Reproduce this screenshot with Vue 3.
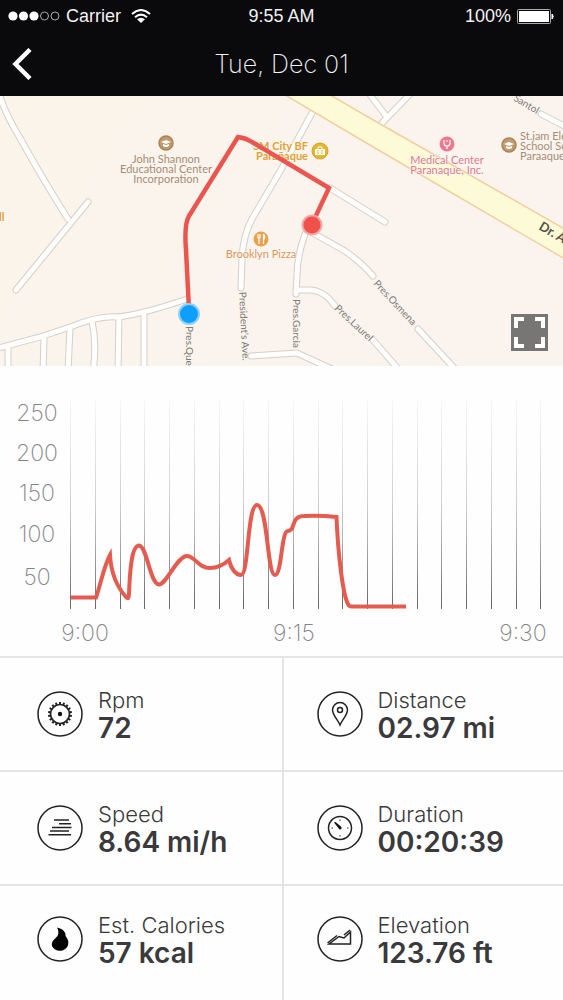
<script setup>
const roads = [
  'M-2 90 Q4 112 20 138 Q42 178 68 219',
  'M88 202 L16 290',
  'M-5 349 L40 337 L70 327 Q100 315 117 317 Q140 315 187 299',
  'M8 348 V372',
  'M44 338 L43 372',
  'M70 328 L68 372',
  'M92 321 Q97 344 93 372',
  'M119 317 L118 372',
  'M144 315 V372',
  'M312 113 L282 168 L252 219 Q243 236 242 258 L241 288',
  'M305 234 Q297 257 297 275 L296 294',
  'M298 290 H309 Q324 290 335 306',
  'M373 340 L400 371',
  'M311 232 L345 251 Q362 263 373 276',
  'M418 329 L457 371',
  'M330 188 L385 222',
  'M251 356 L297 353 L332 369',
  'M381 124 L412 92',
  'M386 116 L368 92',
  'M541 114 L570 129'
]

const mapLabels = [
  { x: 166, y: 163, color: '#a58a76', lines: ['John Shannon', 'Educational Center', 'Incorporation'] },
  { x: 447, y: 164, color: '#dc7890', lines: ['Medical Center', 'Paranaque, Inc.'] },
  { x: 261, y: 258, color: '#d99660', lines: ['Brooklyn Pizza'] }
]

const streets = [
  { x: 186, y: 326, angle: 90, name: 'Pres.Que' },
  { x: 239, y: 292, angle: 87, name: "President's Ave." },
  { x: 293, y: 299, angle: 90, name: 'Pres.Garcia' },
  { x: 334, y: 309, angle: 43, name: 'Pres.Laurel' },
  { x: 373, y: 284, angle: 47, name: 'Pres.Osmena' },
  { x: 513, y: 100, angle: 31, name: 'Santol' }
]

const gridLines = Array.from({ length: 20 }, (_, i) => Math.round(70 + i * 24.75))
const yLabels = [
  { y: 421, text: '250' },
  { y: 461, text: '200' },
  { y: 501, text: '150' },
  { y: 542, text: '100' },
  { y: 585, text: '50' }
]
const xLabels = [
  { x: 85, text: '9:00' },
  { x: 294, text: '9:15' },
  { x: 523, text: '9:30' }
]

const stats = [
  { icon: 'gear', label: 'Rpm', value: '72' },
  { icon: 'pin', label: 'Distance', value: '02.97 mi' },
  { icon: 'speed', label: 'Speed', value: '8.64 mi/h' },
  { icon: 'dial', label: 'Duration', value: '00:20:39' },
  { icon: 'flame', label: 'Est. Calories', value: '57 kcal' },
  { icon: 'hill', label: 'Elevation', value: '123.76 ft' }
]
const teeth = Array.from({ length: 18 }, (_, i) => i * 20)
</script>

<template>
  <div class="app">
    <header class="top">
      <div class="status">
        <div class="status-left">
          <svg class="signal" viewBox="0 0 52 12" aria-hidden="true">
            <circle cx="5" cy="6" r="4.600" fill="#fff" />
            <circle cx="15.500" cy="6" r="4.600" fill="#fff" />
            <circle cx="26" cy="6" r="4.600" fill="#fff" />
            <circle cx="36.500" cy="6" r="4" fill="none" stroke="#aaa" />
            <circle cx="47" cy="6" r="4" fill="none" stroke="#aaa" />
          </svg>
          <span>Carrier</span>
          <svg class="wifi" viewBox="0 0 20 14" aria-hidden="true">
            <path d="M1 5 Q10 -3 19 5 M4 8.300 Q10 3 16 8.300" fill="none" stroke="#fff" stroke-width="2" />
            <path d="M6 10.300 Q10 7 14 10.300 L10 14 Z" fill="#fff" />
          </svg>
        </div>
        <span class="time">9:55 AM</span>
        <div class="status-right">
          <span>100%</span>
          <svg class="battery" viewBox="0 0 38 15" aria-hidden="true">
            <rect x="0.500" y="0.500" width="33" height="14" rx="1" fill="none" stroke="#aaa" />
            <rect x="2" y="2" width="30" height="11" fill="#fff" />
            <path d="M35 5 Q37.500 7.500 35 10 Z" fill="#fff" stroke="#fff" />
          </svg>
        </div>
      </div>
      <nav class="nav">
        <button class="back" type="button" aria-label="Back">
          <svg viewBox="0 0 20 32"><path d="M18 1.500 L3.500 16 L18 30.500" fill="none" stroke="#fff" stroke-width="4.500" /></svg>
        </button>
        <h1>Tue, Dec 01</h1>
        <span></span>
      </nav>
    </header>

    <section class="map">
      <svg viewBox="0 96 563 270" role="img" aria-label="Route map">
        <defs>
          <linearGradient id="land" x1="0" y1="0" x2="1" y2="0.300">
            <stop offset="0" stop-color="#faf5e9" />
            <stop offset="0.350" stop-color="#fbf4ed" />
            <stop offset="1" stop-color="#fbf4ee" />
          </linearGradient>
        </defs>
        <rect x="0" y="96" width="563" height="270" fill="url(#land)" />
        <g class="roads-edge"><path v-for="d in roads" :key="d" :d="d" /></g>
        <g class="roads"><path v-for="d in roads" :key="d" :d="d" /></g>
        <path d="M280 92 L375 148 L570 262 V232 L375 121 L325 92 Z" fill="#fdfad7" stroke="#f1cf9f" stroke-width="1.500" />

        <g v-for="l in mapLabels" :key="l.lines[0]" class="place" :fill="l.color" text-anchor="middle">
          <text v-for="(t, i) in l.lines" :key="t" :x="l.x" :y="l.y + i * 10">{{ t }}</text>
        </g>
        <g class="place" fill="#e0a238">
          <text class="strong" x="308" y="150" text-anchor="end">SM City BF</text>
          <text class="strong" x="308" y="160" text-anchor="end">Parañaque</text>
          <text class="strong" x="-1" y="221">ll</text>
        </g>
        <g class="place" fill="#a58a76">
          <text x="520" y="140">St.jam Ele</text>
          <text x="520" y="150">School Sc</text>
          <text x="520" y="160">Paraaque</text>
        </g>
        <text v-for="s in streets" :key="s.name" class="street" :transform="`translate(${s.x} ${s.y}) rotate(${s.angle})`">{{ s.name }}</text>
        <text class="avenue" transform="translate(538 229) rotate(30)">Dr. A.</text>

        <g v-for="x in [166, 509]" :key="x" :transform="`translate(${x} ${x === 166 ? 143 : 145})`">
          <circle r="7" fill="#c29a6d" stroke="#a98459" stroke-width="1.500" />
          <path d="M-5 -1 L0 -3 L5 -1 L0 1 Z M-3 1 V3 Q0 5 3 3 V1 L0 2 Z" fill="#fff" />
        </g>
        <g transform="translate(447 144)">
          <circle r="7.500" fill="#ed7990" />
          <path d="M-3 -4 V-1 Q-3 2 0 2 Q3 2 3 -1 V-4 M0 2 V5 M-1 -3 H1" fill="none" stroke="#fff" stroke-width="1.200" />
        </g>
        <g transform="translate(320 151)">
          <circle r="8" fill="#e7b52f" stroke="#d5a12a" />
          <rect x="-5" y="-2" width="10" height="6" fill="#fff" />
          <path d="M-2 -2 V-4 H2 V-2" fill="none" stroke="#fff" />
          <path d="M-2 -1 V3 M2 -1 V3" stroke="#e7b52f" />
        </g>
        <g transform="translate(261 239)">
          <circle r="7.500" fill="#eba04e" />
          <path d="M-3 -5 V-1 M-1 -5 V-1 M-2 -1 V5 M-3 -1 H-1" stroke="#fff" fill="none" stroke-width="1.200" />
          <path d="M2.500 -5 V5 M2.500 -5 Q5 -2 2.500 1" stroke="#fff" fill="#fff" stroke-width="1.200" />
        </g>

        <path d="M189 309 L186 250 Q184 224 189 216 L238 137 Q246 138 252 142 L329 188 L313 222" fill="none" stroke="#ea564f" stroke-width="4.500" />
        <circle cx="189" cy="314" r="11" fill="#8fd0f8" />
        <circle cx="189" cy="314" r="9" fill="#0d9ffb" />
        <circle cx="312" cy="225" r="10.500" fill="#f3a7a5" />
        <circle cx="312" cy="225" r="8.500" fill="#f1504b" />
      </svg>
      <button class="expand" type="button" aria-label="Full screen map">
        <svg viewBox="0 0 37 37"><path d="M5 14 V5 H13 M24 5 H32 V14 M32 23 V32 H24 M13 32 H5 V23" fill="none" stroke="#fff" stroke-width="4" /></svg>
      </button>
    </section>

    <section class="chart">
      <svg viewBox="0 366 563 290" role="img" aria-label="Activity over time">
        <defs>
          <linearGradient id="fade" x1="0" y1="0" x2="0" y2="1">
            <stop offset="0" stop-color="#777" stop-opacity="0.050" />
            <stop offset="0.500" stop-color="#777" stop-opacity="0.350" />
            <stop offset="1" stop-color="#666" stop-opacity="1" />
          </linearGradient>
        </defs>
        <rect v-for="x in gridLines" :key="x" :x="x" y="400" width="1" height="209" fill="url(#fade)" />
        <text v-for="l in yLabels" :key="l.text" class="axis" x="37" :y="l.y" text-anchor="middle">{{ l.text }}</text>
        <text v-for="l in xLabels" :key="l.text" class="axis" :x="l.x" y="641" text-anchor="middle">{{ l.text }}</text>
        <path
          class="trace"
          d="M71 597.500 H96 C101 583 104 566 110 555 C111 573 118 588 126 597 Q129 600 129 594 C130 567 132 546 139 545.500 C147 546 150 584 159 584.500 C167 584 177 556 187 556 C195 556 198 568 210 568 Q220 568 229 560 C231 569 236 575 241 575 C249 575 247 505 257 505 C268 505 267 575 275 575 C282 575 281 531 288 531 C296 531 290 516 304 516 Q320 515 336.500 517 C338 555 343 595 348 604 Q349 606.500 352 606.500 H406"
        />
      </svg>
    </section>

    <section class="stats">
      <div v-for="s in stats" :key="s.label" class="stat">
        <svg class="icon" viewBox="-23 -23 46 46" aria-hidden="true">
          <circle r="22" fill="none" stroke="#222" stroke-width="1.500" />
          <g v-if="s.icon === 'gear'">
            <circle r="9.500" fill="none" stroke="#222" stroke-width="1.700" />
            <rect v-for="a in teeth" :key="a" x="-1" y="-12" width="2" height="2.500" fill="#222" :transform="`rotate(${a})`" />
            <circle r="2.200" fill="#111" />
          </g>
          <g v-else-if="s.icon === 'pin'" fill="none" stroke="#222" stroke-width="1.500">
            <path d="M0 11 C-2 6 -7.500 1 -7.500 -4 A7.500 7.500 0 0 1 7.500 -4 C7.500 1 2 6 0 11 Z" />
            <circle cy="-4" r="2.500" />
          </g>
          <path v-else-if="s.icon === 'speed'" d="M-6 -8 H9 M-1 -4.300 H11 M-8 -0.600 H11.500 M-10 3.100 H9 M-11.500 6.800 H11" fill="none" stroke="#222" stroke-width="1.500" />
          <g v-else-if="s.icon === 'dial'">
            <circle r="11.500" fill="none" stroke="#222" stroke-width="1.500" />
            <path d="M0 -8.500 V-7 M0 7 V8.500 M-8.500 0 H-7 M7 0 H8.500" stroke="#333" />
            <path d="M-6 -5.500 L-4.500 -6 L1.500 -1 Q2 2 -0.500 1.500 Z" fill="#111" />
          </g>
          <path v-else-if="s.icon === 'flame'" d="M-3 -11.500 C4 -10 6 -6 5.500 -3 C8 0 9 3 8 6 C6 13 -5 14 -8 7 C-9 2 -5 0 -2.500 -3 C-1 -6 -1.500 -9 -3 -11.500 Z" fill="#000" />
          <path v-else d="M-11 5 L-1 -2.500 L4 -1 L10.500 -7 V5 Z M-12.500 4 L-3 -3.500 M4 -4 L10 -9" fill="none" stroke="#222" stroke-width="1.500" />
        </svg>
        <div>
          <div class="label">{{ s.label }}</div>
          <div class="value">{{ s.value }}</div>
        </div>
      </div>
    </section>
  </div>
</template>

<style>
body {
  background: #fefefe;
}
</style>

<style scoped>
.app {
  display: flex;
  flex-direction: column;
  min-height: 100vh;
  font-family: Inter, "Liberation Sans", sans-serif;
  color: #3a393b;
}
svg {
  display: block;
}
button {
  border: 0;
  padding: 0;
  cursor: pointer;
}
.top {
  background: #0a090c;
  color: #f2f2f2;
}
.status {
  display: grid;
  grid-template-columns: 1fr auto 1fr;
  align-items: center;
  height: 32px;
  padding: 0 8px;
  font: 18px "Liberation Sans", sans-serif;
}
.status-left,
.status-right {
  display: flex;
  align-items: center;
}
.status-right {
  justify-content: flex-end;
  gap: 6px;
}
.signal {
  width: 52px;
  margin-right: 6px;
}
.wifi {
  width: 20px;
  margin-left: 10px;
}
.battery {
  width: 38px;
}
.nav {
  display: grid;
  grid-template-columns: 48px 1fr 48px;
  align-items: center;
  height: 64px;
}
.back {
  padding-left: 12px;
  background: none;
}
.back svg {
  width: 20px;
}
h1 {
  margin: 0;
  font-size: 25px;
  font-weight: 200;
  text-align: center;
}
.map {
  position: relative;
}
.map > svg,
.chart > svg {
  width: 100%;
}
.roads-edge path {
  fill: none;
  stroke: #d3d0cb;
  stroke-width: 7px;
  stroke-linecap: round;
}
.roads path {
  fill: none;
  stroke: #fffefc;
  stroke-width: 5px;
  stroke-linecap: round;
}
.place text {
  font-family: Lato, sans-serif;
  font-size: 11px;
  paint-order: stroke;
  stroke: #fdf8f0;
  stroke-width: 1px;
}
.place .strong {
  font-weight: 700;
}
.street {
  font-family: Lato, sans-serif;
  font-size: 10px;
  fill: #7d7976;
}
.avenue {
  font-family: Lato, sans-serif;
  font-size: 13px;
  font-weight: 700;
  fill: #55524c;
}
.expand {
  position: absolute;
  right: 15px;
  bottom: 15px;
  background: #777674;
}
.expand svg {
  width: 37px;
}
.axis {
  font-size: 23px;
  font-weight: 200;
  fill: #858388;
}
.trace {
  fill: none;
  stroke: #e45c50;
  stroke-width: 4px;
}
.stats {
  flex: 1;
  display: grid;
  grid-template-columns: 1fr 1fr;
  grid-template-rows: 114px 114px 1fr;
}
.stat {
  display: flex;
  align-items: center;
  gap: 15px;
  padding-left: 37px;
  border-top: 2px solid #e4e4e5;
}
.stat:nth-child(even) {
  padding-left: 33px;
  border-left: 2px solid #e4e4e5;
}
.stat:nth-last-child(-n + 2) {
  padding-bottom: 8px;
}
.icon {
  flex: none;
  width: 46px;
}
.label {
  font-size: 22px;
  line-height: 28px;
  font-weight: 300;
}
.value {
  font-size: 28px;
  line-height: 28px;
  font-weight: 600;
}
</style>
